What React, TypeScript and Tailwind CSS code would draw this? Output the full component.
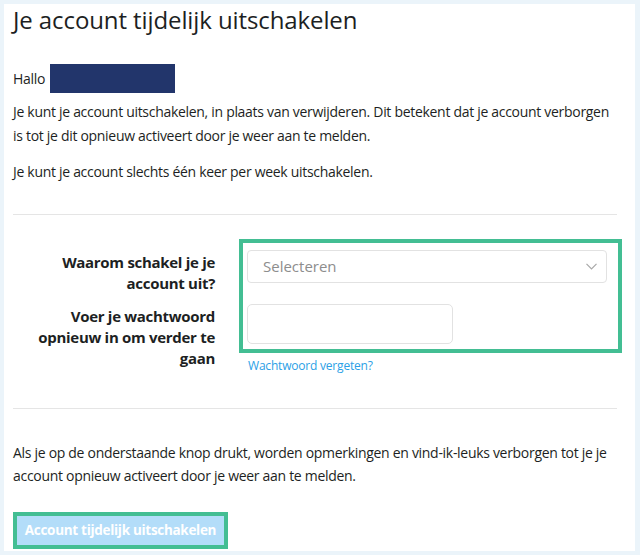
import React from 'react'

/*
  ? Deactivate account page
*/

export default function App() {
  return (
    <div className="h-[555px] bg-[#ebf4fa] pt-[4px] pl-[4px] pr-[5px] pb-[4px] font-['Open_Sans',sans-serif] text-[#1d1f23]">
      <div className="h-full bg-white pl-[9px] pr-[18px]">
        <h1 className="h-[32px] text-[24px] leading-[32px] font-normal tracking-[-0.1px]">Je account tijdelijk uitschakelen</h1>

        <div className="mt-[28px] flex h-[29px] items-center text-[14px] tracking-[-0.3px]">
          <span>Hallo</span>
          <span className="ml-[5px] h-[29px] w-[125px] bg-[#22356b]" />
        </div>

        <p className="mt-[7px] text-[14px] leading-[24px] tracking-[-0.3px]">
          Je kunt je account uitschakelen, in plaats van verwijderen. Dit betekent dat je account verborgen is tot je dit opnieuw activeert door je weer aan te melden.
        </p>
        <p className="mt-[12px] text-[14px] leading-[24px] tracking-[-0.3px]">
          Je kunt je account slechts één keer per week uitschakelen.
        </p>

        <hr className="mt-[30px] border-t border-[#e5e5e5]" />

        <div className="mt-[24px] flex">
          <div className="w-[202px] shrink-0 pt-[13px] text-right text-[15px] font-bold leading-[21px] tracking-[-0.3px]">
            <div className="h-[54px]">Waarom schakel je je<br />account uit?</div>
            <div>Voer je wachtwoord<br />opnieuw in om verder te<br />gaan</div>
          </div>
          <div className="ml-[24px] shrink-0">
            <div className="w-[383px] border-4 border-[#43be93] pt-[7px] pl-[4px] pb-[5px]">
              <div className="flex h-[33px] w-[360px] items-center justify-between rounded-[4px] border border-[#e2e2e2] pl-[15px] pr-[9px]">
                <span className="text-[15px] text-[#8d8d8d]">Selecteren</span>
                <svg width="11" height="7" viewBox="0 0 11 7" fill="none" stroke="#a8a8a8" strokeWidth="1.2">
                  <path d="M0.5 0.8l5 5 5-5" />
                </svg>
              </div>
              <input type="password" className="mt-[21px] block h-[40px] w-[206px] rounded-[5px] border border-[#e2e2e2] outline-none" />
            </div>
            <a className="mt-[5px] ml-[9px] block text-[12px] leading-[16px] tracking-[-0.2px] text-[#2b9fe6]">Wachtwoord vergeten?</a>
          </div>
        </div>

        <hr className="mt-[34px] border-t border-[#e5e5e5]" />

        <p className="mt-[32px] text-[14px] leading-[23px] tracking-[-0.3px]">
          Als je op de onderstaande knop drukt, worden opmerkingen en vind-ik-leuks verborgen tot je je account opnieuw activeert door je weer aan te melden.
        </p>

        <div className="mt-[25px] inline-block border-4 border-[#43be93]">
          <button className="block h-[29px] w-[207px] whitespace-nowrap bg-[#b3ddf9] text-[13.5px] font-bold tracking-[-0.3px] text-white">
            Account tijdelijk uitschakelen
          </button>
        </div>
      </div>
    </div>
  )
}
